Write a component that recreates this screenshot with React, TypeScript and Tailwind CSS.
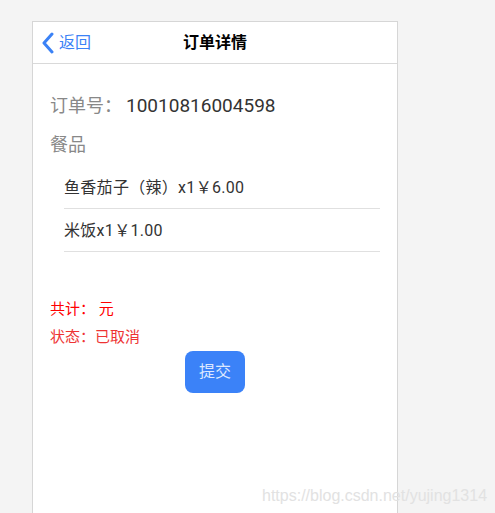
export default function App() {
  return (
    <div
      className="relative h-[513px] w-[495px] overflow-hidden bg-[#f4f4f4]"
      style={{ fontFamily: "Roboto, 'Noto Sans CJK SC', sans-serif" }}
    >
      <div className="ml-[32px] mt-[21px] h-[520px] w-[366px] border border-[#d6d6d6] bg-white">
        {/* header */}
        <div className="relative flex h-[42px] items-center border-b border-[#d9d9d9]">
          <div className="flex items-center pl-[8px] text-[#3b82f6]">
            <svg width="14" height="22" viewBox="0 0 14 22" className="mr-[4px]">
              <path d="M11 2 L3 11 L11 20" fill="none" stroke="#3b82f6" strokeWidth="3" strokeLinecap="round" strokeLinejoin="round" />
            </svg>
            <span className="text-[16px] leading-none">返回</span>
          </div>
          <div className="absolute left-0 right-0 text-center text-[16px] font-bold text-black">订单详情</div>
        </div>

        <div className="px-[17px] pt-[26px]">
          <div className="flex items-baseline text-[18px] leading-[28px]">
            <span className="text-[#888]" style={{ fontFamily: "'Noto Sans CJK SC', serif" }}>订单号：</span>
            <span className="ml-[4px] text-[19px] text-[#333]">10010816004598</span>
          </div>
          <div className="mt-[11px] text-[18px] leading-[28px] text-[#888]">餐品</div>

          <div className="ml-[14px] mt-[7px]">
            <div className="flex h-[43px] items-center border-b border-[#e0e0e0] pt-[2px] text-[16px] tracking-[0.3px] text-[#333]">
              鱼香茄子（辣）x1￥6.00
            </div>
            <div className="flex h-[43px] items-center border-b border-[#e0e0e0] pt-[2px] text-[16px] tracking-[0.3px] text-[#333]">
              米饭x1￥1.00
            </div>
          </div>

          <div className="mt-[43px] text-[15px] leading-[28px] text-[#ff0000]">共计：&nbsp;元</div>
          <div className="text-[15px] leading-[28px] text-[#ee3333]">状态：已取消</div>
          <div className="flex justify-center">
            <button className="h-[42px] w-[60px] rounded-[8px] bg-[#3b82f8] text-[16px] text-[#dde8ff]">提交</button>
          </div>
        </div>
      </div>
      <div className="absolute left-[262px] top-[484px] text-[16px] text-[#e2e2e2]" style={{ fontFamily: "Arial, 'Liberation Sans', sans-serif" }}>
        https://blog.csdn.net/yujing1314
      </div>
    </div>
  );
}
